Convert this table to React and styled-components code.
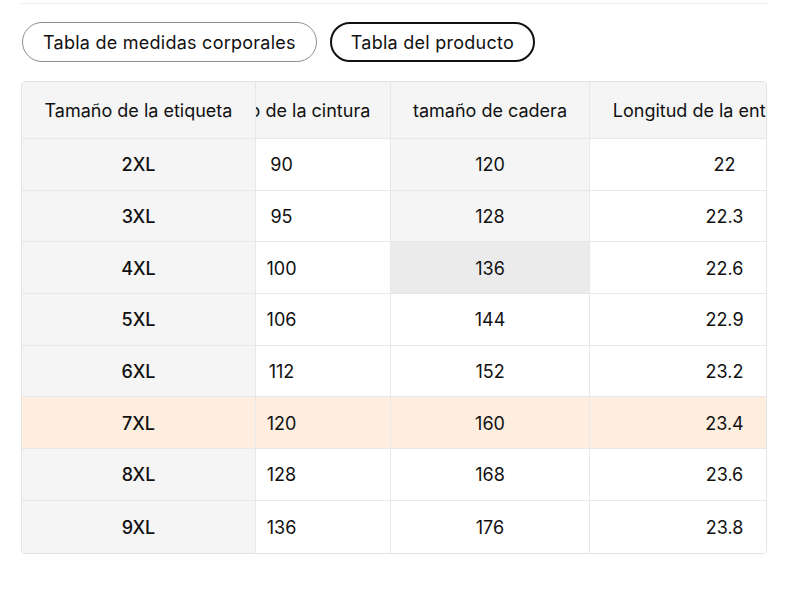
import React, { useLayoutEffect, useRef } from "react";
import styled, { createGlobalStyle } from "styled-components";

const GlobalStyle = createGlobalStyle`
  html, body { margin: 0; padding: 0; background: #ffffff; }
  body {
    font-family: Inter, "Noto Sans", "Liberation Sans", sans-serif;
    color: #111111;
    -webkit-font-smoothing: antialiased;
  }
`;

const Page = styled.div`
  width: 746px;
  padding: 3px 0 0 21px;
  display: flex;
  flex-direction: column;
`;

const Divider = styled.div`
  height: 1px;
  background: #ececec;
`;

const Tabs = styled.div`
  display: flex;
  gap: 13px;
  margin-top: 18px;
  padding-left: 1px;
`;

const TabButton = styled.button`
  height: 40px;
  box-sizing: border-box;
  padding: 0 ${(p) => (p.$active ? "19px" : "20px")};
  border-radius: 20px;
  border: ${(p) => (p.$active ? "2px solid #111111" : "1px solid #8f8f8f")};
  background: #ffffff;
  font-family: inherit;
  font-size: 18px;
  letter-spacing: 0.25px;
  font-weight: 400;
  color: #111111;
  cursor: pointer;
`;

const TableBox = styled.div`
  margin-top: 19px;
  border: 1px solid #e3e3e3;
  border-radius: 4px;
  overflow-x: auto;
  overflow-y: hidden;
  scrollbar-width: none;
  &::-webkit-scrollbar { display: none; }
`;

const Table = styled.table`
  border-collapse: separate;
  border-spacing: 0;
  table-layout: fixed;
  width: 920px;
  font-size: 18px;
`;

const cellBg = (p) =>
  p.$tone === "row"
    ? "#fdeee0"
    : p.$tone === "hover"
    ? "#ebebeb"
    : p.$tone === "col" || p.$sticky
    ? "#f5f5f5"
    : "#ffffff";

const HeadCell = styled.th`
  height: 57px;
  box-sizing: border-box;
  padding: 0 8px;
  background: #f5f5f5;
  font-weight: 400;
  text-align: center;
  white-space: nowrap;
  overflow: hidden;
  border-bottom: 1px solid #e8e8e8;
  border-right: 1px solid #e8e8e8;
  position: ${(p) => (p.$sticky ? "sticky" : "static")};
  left: 0;
  z-index: ${(p) => (p.$sticky ? 2 : "auto")};
  &:last-child { border-right: none; }
`;

const Cell = styled.td`
  height: 51.7px;
  box-sizing: border-box;
  padding: 1px 8px 0;
  text-align: center;
  white-space: nowrap;
  font-weight: ${(p) => (p.$sticky ? 500 : 400)};
  background: ${cellBg};
  border-bottom: ${(p) => (p.$last ? "none" : "1px solid #e8e8e8")};
  border-right: 1px solid #e8e8e8;
  position: ${(p) => (p.$sticky ? "sticky" : "static")};
  left: 0;
  z-index: ${(p) => (p.$sticky ? 1 : "auto")};
  &:last-child { border-right: none; }
`;

const columns = [
  { label: "Tamaño de la etiqueta", width: 234 },
  { label: "Tamaño de la cintura", width: 218 },
  { label: "tamaño de cadera", width: 199 },
  { label: "Longitud de la entrepierna", width: 269 },
];

const rows = [
  ["2XL", "90", "120", "22"],
  ["3XL", "95", "128", "22.3"],
  ["4XL", "100", "136", "22.6"],
  ["5XL", "106", "144", "22.9"],
  ["6XL", "112", "152", "23.2"],
  ["7XL", "120", "160", "23.4"],
  ["8XL", "128", "168", "23.6"],
  ["9XL", "136", "176", "23.8"],
];

const SELECTED_ROW = 5;
const HOVER_ROW = 2;
const HOVER_COL = 2;

function toneFor(r, c) {
  if (r === SELECTED_ROW) return "row";
  if (c === HOVER_COL && r === HOVER_ROW) return "hover";
  if (c === HOVER_COL && r < HOVER_ROW) return "col";
  return undefined;
}

export default function App() {
  const boxRef = useRef(null);
  useLayoutEffect(() => {
    if (boxRef.current) boxRef.current.scrollLeft = 83;
  }, []);

  return (
    <>
      <GlobalStyle />
      <Page>
        <Divider />
        <Tabs>
          <TabButton>Tabla de medidas corporales</TabButton>
          <TabButton $active>Tabla del producto</TabButton>
        </Tabs>
        <TableBox ref={boxRef}>
          <Table>
            <colgroup>
              {columns.map((c) => (
                <col key={c.label} style={{ width: c.width }} />
              ))}
            </colgroup>
            <thead>
              <tr>
                {columns.map((c, i) => (
                  <HeadCell key={c.label} $sticky={i === 0}>
                    {c.label}
                  </HeadCell>
                ))}
              </tr>
            </thead>
            <tbody>
              {rows.map((row, r) => (
                <tr key={row[0]}>
                  {row.map((v, c) => (
                    <Cell
                      key={c}
                      $sticky={c === 0}
                      $tone={toneFor(r, c)}
                      $last={r === rows.length - 1}
                    >
                      {v}
                    </Cell>
                  ))}
                </tr>
              ))}
            </tbody>
          </Table>
        </TableBox>
      </Page>
    </>
  );
}
